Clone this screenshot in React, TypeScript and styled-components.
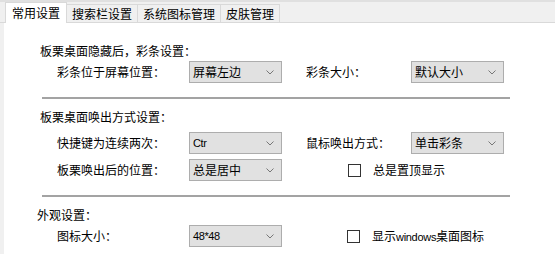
import { createGlobalStyle, styled } from 'styled-components';

const GlobalStyle = createGlobalStyle`
  html, body {
    margin: 0;
    padding: 0;
    background: #ffffff;
  }
  body {
    font-family: "Noto Sans CJK SC", "Microsoft YaHei", sans-serif;
    font-size: 12px;
    color: #000;
  }
`;

const tabs = ['常用设置', '搜索栏设置', '系统图标管理', '皮肤管理'];

const Chevron = () => (
    <svg width="8" height="5" viewBox="0 0 8 5">
        <polyline points="0.5,0.5 4,4 7.5,0.5" fill="none" stroke="#777" strokeWidth="1" />
    </svg>
);

const Select = ({ value, latin }: { value: string; latin?: boolean }) => (
    <StyledSelect>
        <StyledSelectValue latin={latin}>{value}</StyledSelectValue>
        <Chevron />
    </StyledSelect>
);

const Check = ({ label, indent }: { label: React.ReactNode; indent: number }) => (
    <StyledCheckRow indent={indent}>
        <StyledBox />
        <span>{label}</span>
    </StyledCheckRow>
);

export default function App() {
    return (
        <StyledPage>
            <GlobalStyle />
            <StyledTabBar>
                {tabs.map((t, i) => (
                    <StyledTab key={t} active={i === 0}>{t}</StyledTab>
                ))}
            </StyledTabBar>
            <StyledContent>
                <StyledTitle indent={36} gap={20}>板栗桌面隐藏后，彩条设置：</StyledTitle>
                <StyledRow gap={2}>
                    <StyledLabel>彩条位于屏幕位置：</StyledLabel>
                    <Select value="屏幕左边" />
                    <span />
                    <StyledLabel>彩条大小：</StyledLabel>
                    <Select value="默认大小" />
                </StyledRow>
                <StyledSeparator />

                <StyledTitle indent={36} gap={10}>板栗桌面唤出方式设置：</StyledTitle>
                <StyledRow gap={7}>
                    <StyledLabel>快捷键为连续两次：</StyledLabel>
                    <Select value="Ctr" latin />
                    <span />
                    <StyledLabel>鼠标唤出方式：</StyledLabel>
                    <Select value="单击彩条" />
                </StyledRow>
                <StyledRow gap={5}>
                    <StyledLabel>板栗唤出后的位置：</StyledLabel>
                    <Select value="总是居中" />
                    <span />
                    <Check indent={42} label="总是置顶显示" />
                </StyledRow>
                <StyledSeparator />

                <StyledTitle indent={33} gap={10}>外观设置：</StyledTitle>
                <StyledRow gap={2}>
                    <StyledLabel>图标大小：</StyledLabel>
                    <Select value="48*48" latin />
                    <span />
                    <Check indent={41} label={<>显示<StyledLatin>windows</StyledLatin>桌面图标</>} />
                </StyledRow>
                <StyledRow gap={5}>
                    <span />
                    <StyledBox />
                </StyledRow>
            </StyledContent>
        </StyledPage>
    );
}

const StyledPage = styled.div`
    width: 555px;
    height: 254px;
    overflow: hidden;
    display: flex;
    flex-direction: column;
    background: #ffffff;
`;

const StyledTabBar = styled.div`
    display: flex;
    align-items: flex-end;
    box-sizing: border-box;
    height: 23px;
    padding-left: 5px;
    background: #f0f0f0;
    border-top: 2px solid #e0e0e0;
    border-bottom: 1px solid #d9d9d9;
    flex-shrink: 0;
`;

const StyledTab = styled.div<{ active: boolean }>`
    box-sizing: border-box;
    display: flex;
    align-items: center;
    height: ${({ active }) => (active ? '21px' : '18px')};
    margin-bottom: ${({ active }) => (active ? '-1px' : '0')};
    padding: ${({ active }) => (active ? '0 6px 1px 6px' : '0 5px 0 5px')};
    background: ${({ active }) => (active ? '#ffffff' : '#f0f0f0')};
    border: 1px solid #d9d9d9;
    border-bottom: none;
    border-left: ${({ active }) => (active ? '1px solid #d9d9d9' : 'none')};
    line-height: 16px;
    white-space: nowrap;
`;

const StyledContent = styled.div`
    flex: 1;
    display: flex;
    flex-direction: column;
    border-left: 4px solid #f0f0f0;
`;

const StyledTitle = styled.div<{ indent: number; gap: number }>`
    margin-top: ${({ gap }) => gap}px;
    padding-left: ${({ indent }) => indent}px;
    line-height: 16px;
    height: 16px;
`;

const StyledRow = styled.div<{ gap: number }>`
    display: grid;
    grid-template-columns: 132px 93px 24px 105px 93px;
    align-items: center;
    height: 22px;
    margin-top: ${({ gap }) => gap}px;
    padding-left: 53px;
    flex-shrink: 0;
`;

const StyledLabel = styled.span`
    line-height: 16px;
    white-space: nowrap;
`;

const StyledSelect = styled.div`
    box-sizing: border-box;
    height: 22px;
    display: flex;
    align-items: center;
    justify-content: space-between;
    padding: 0 7px 0 3px;
    background: #e1e1e1;
    border: 1px solid #adadad;
`;

const StyledSelectValue = styled.span<{ latin?: boolean }>`
    font-family: ${({ latin }) => (latin ? '"Liberation Sans", Arial, sans-serif' : 'inherit')};
    font-size: ${({ latin }) => (latin ? '11px' : '12px')};
    letter-spacing: ${({ latin }) => (latin ? '-0.4px' : '0')};
    line-height: 16px;
`;

const StyledLatin = styled.span`
    font-family: "Liberation Sans", Arial, sans-serif;
    font-size: 11px;
    letter-spacing: -0.3px;
`;

const StyledCheckRow = styled.div<{ indent: number }>`
    grid-column: 4 / 6;
    display: flex;
    align-items: center;
    gap: 12px;
    padding-left: ${({ indent }) => indent}px;
    line-height: 16px;
    white-space: nowrap;
`;

const StyledBox = styled.span`
    box-sizing: border-box;
    width: 13px;
    height: 13px;
    background: #ffffff;
    border: 1px solid #333333;
    flex-shrink: 0;
`;

const StyledSeparator = styled.div`
    margin-top: 14px;
    margin-left: 38px;
    width: 468px;
    height: 2px;
    background: #a3a3a3;
    flex-shrink: 0;
`;
